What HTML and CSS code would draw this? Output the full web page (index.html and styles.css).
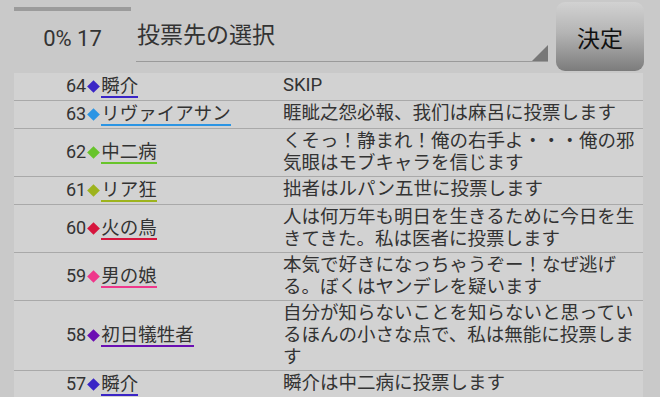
FILE: index.html
```html
<!DOCTYPE html>
<html lang="ja">
<head>
    <meta charset="UTF-8">
    <meta name="viewport" content="width=device-width, initial-scale=1.0">
    <title>投票先の選択</title>
    <link rel="stylesheet" href="styles.css">
</head>
<body>
    <div class="header">
        <div class="progress">
            <div class="progress-bar"></div>
            <div class="progress-text">0% 17</div>
        </div>
        <div class="spinner">投票先の選択</div>
        <button class="decide-btn">決定</button>
    </div>

    <div class="list">
        <div class="row">
            <div class="who c-indigo">64<span class="mark"></span><span class="name">瞬介</span></div>
            <div class="comment">SKIP</div>
        </div>
        <div class="row">
            <div class="who c-sky">63<span class="mark"></span><span class="name">リヴァイアサン</span></div>
            <div class="comment">睚眦之怨必報、我们は麻呂に投票します</div>
        </div>
        <div class="row">
            <div class="who c-green">62<span class="mark"></span><span class="name">中二病</span></div>
            <div class="comment">くそっ！静まれ！俺の右手よ・・・俺の邪気眼はモブキャラを信じます</div>
        </div>
        <div class="row">
            <div class="who c-olive">61<span class="mark"></span><span class="name">リア狂</span></div>
            <div class="comment">拙者はルパン五世に投票します</div>
        </div>
        <div class="row">
            <div class="who c-red">60<span class="mark"></span><span class="name">火の鳥</span></div>
            <div class="comment">人は何万年も明日を生きるために今日を生きてきた。私は医者に投票します</div>
        </div>
        <div class="row">
            <div class="who c-pink">59<span class="mark"></span><span class="name">男の娘</span></div>
            <div class="comment">本気で好きになっちゃうぞー！なぜ逃げる。ぼくはヤンデレを疑います</div>
        </div>
        <div class="row">
            <div class="who c-purple">58<span class="mark"></span><span class="name">初日犠牲者</span></div>
            <div class="comment">自分が知らないことを知らないと思っているほんの小さな点で、私は無能に投票します</div>
        </div>
        <div class="row">
            <div class="who c-indigo">57<span class="mark"></span><span class="name">瞬介</span></div>
            <div class="comment">瞬介は中二病に投票します</div>
        </div>
    </div>
</body>
</html>
```

FILE: styles.css
```css
body {
    margin: 0;
    padding: 0;
    height: 397px;
    overflow: hidden;
    background: #c9c9c9;
    color: #333;
    font-family: Roboto, "Noto Sans CJK JP", sans-serif;
}

.header {
    display: flex;
    align-items: flex-start;
    height: 73px;
    padding-left: 14px;
}

.progress {
    width: 117px;
    padding-top: 7px;
}

.progress-bar {
    height: 4px;
    background: #9b9b9b;
}

.progress-text {
    margin-top: 15px;
    font-size: 22px;
    line-height: 26px;
    text-align: center;
}

.spinner {
    position: relative;
    box-sizing: border-box;
    width: 412px;
    height: 62px;
    margin-left: 5px;
    padding-top: 23px;
    padding-left: 1px;
    border-bottom: 1px solid #9a9a9a;
    font-size: 23px;
    line-height: 26px;
    color: #333;
}

.spinner::after {
    content: "";
    position: absolute;
    right: 0;
    bottom: 0;
    width: 0;
    height: 0;
    border-left: 16px solid transparent;
    border-bottom: 16px solid #777;
}

.decide-btn {
    width: 88px;
    height: 69px;
    margin-top: 2px;
    margin-left: 8px;
    padding: 0;
    border: none;
    border-radius: 9px;
    background: linear-gradient(to bottom, #d2d2d2 0%, #b4b4b4 45%, #7c7c7c 100%);
    color: #111;
    font-family: "Noto Sans CJK JP", sans-serif;
    font-size: 23px;
}

.list {
    margin-left: 14px;
    width: 629px;
    min-height: 324px;
    background: #d2d2d2;
}

.row {
    display: grid;
    grid-template-columns: 269px 1fr;
    border-bottom: 1px solid #a9a9a9;
    padding: 1px 0 2px;
    font-size: 18.5px;
    line-height: 22px;
}

.who {
    display: flex;
    align-items: center;
    padding-left: 52px;
    font-size: 18px;
}

.mark {
    display: inline-block;
    width: 9px;
    height: 9px;
    margin: 0 3px;
    background: var(--c);
    transform: rotate(45deg);
}

.name {
    font-size: 18.5px;
    line-height: 20px;
    padding-top: 2px;
    border-bottom: 2px solid var(--c);
}

.comment {
    padding-right: 6px;
}

.c-indigo { --c: #3a25c6; }
.c-sky { --c: #2b95e4; }
.c-green { --c: #68c42b; }
.c-olive { --c: #9db31d; }
.c-red { --c: #d6153d; }
.c-pink { --c: #ef378b; }
.c-purple { --c: #6a0fb3; }
```
